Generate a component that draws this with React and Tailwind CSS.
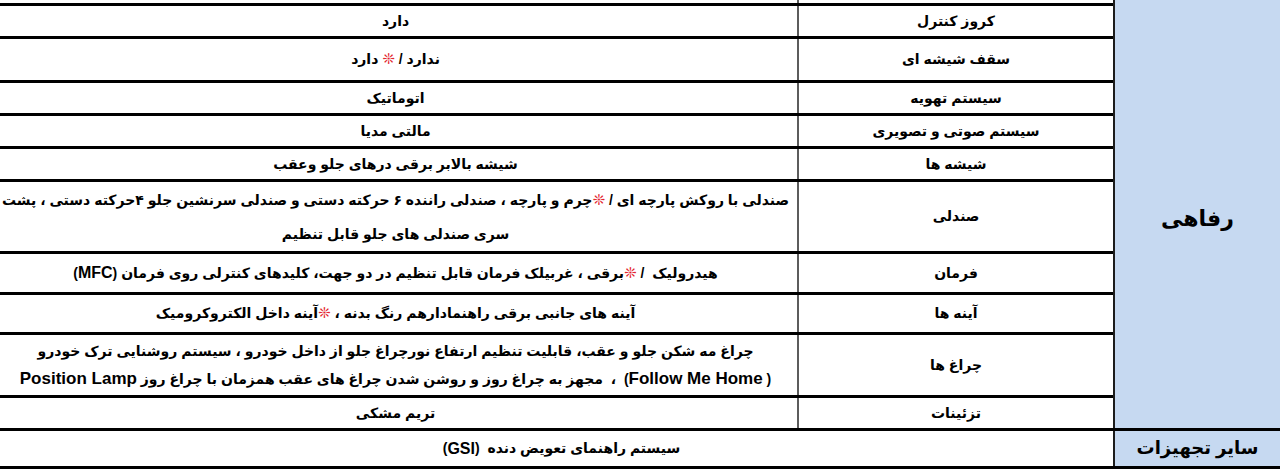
import React from 'react'

const Star = () => <span className="text-[#e3262f] text-[15px]">❊</span>

const Latin = ({ children }) => <span className="text-[17px]">{children}</span>

const rows = [
  { label: 'کروز کنترل', h: 'h-[33px]', value: 'دارد' },
  {
    label: 'سقف شیشه ای',
    h: 'h-[44px]',
    value: (
      <>
        ندارد / <Star /> دارد
      </>
    ),
  },
  { label: 'سیستم تهویه', h: 'h-[33px]', value: 'اتوماتیک' },
  { label: 'سیستم صوتی و تصویری', h: 'h-[33px]', value: 'مالتی مدیا' },
  { label: 'شیشه ها', h: 'h-[33px]', value: 'شیشه بالابر برقی درهای جلو وعقب' },
  {
    label: 'صندلی',
    h: 'h-[72px]',
    lead: 'leading-[34px]',
    value: (
      <>
        صندلی با روکش پارچه ای / <Star />چرم و پارچه ، صندلی راننده ۶ حرکته دستی و صندلی سرنشین جلو ۴حرکته دستی ، پشت
        <br />
        سری صندلی های جلو قابل تنظیم
      </>
    ),
  },
  {
    label: 'فرمان',
    h: 'h-[41px]',
    value: (
      <>
        هیدرولیک &nbsp;/ <Star />برقی ، غربیلک فرمان قابل تنظیم در دو جهت، کلیدهای کنترلی روی فرمان (<span className="text-[16px]">MFC</span>)
      </>
    ),
  },
  {
    label: 'آینه ها',
    h: 'h-[40px]',
    value: (
      <>
        آینه های جانبی برقی راهنمادارهم رنگ بدنه ، <Star />آینه داخل الکتروکرومیک
      </>
    ),
  },
  {
    label: 'چراغ ها',
    h: 'h-[63px]',
    lead: 'leading-[28px]',
    value: (
      <>
        چراغ مه شکن جلو و عقب، قابلیت تنظیم ارتفاع نورچراغ جلو از داخل خودرو ، سیستم روشنایی ترک خودرو
        <br />( <Latin>Follow Me Home</Latin>) &nbsp;، &nbsp;مجهز به چراغ روز و روشن شدن چراغ های عقب همزمان با چراغ روز <Latin>Position Lamp</Latin>
      </>
    ),
  },
  { label: 'تزئینات', h: 'h-[33px]', value: 'تریم مشکی' },
]

export default function App() {
  return (
    <div
      dir="rtl"
      className="w-[1280px] h-[470px] bg-white text-black font-bold text-[14px] font-['Liberation_Sans','DejaVu_Sans',sans-serif] overflow-hidden"
    >
      <div className="flex h-[428px]">
        <div className="w-[167px] shrink-0 bg-[#c6d9f1] border-l-2 border-[#1c1c1c] flex items-center justify-center pt-[8px]">
          <span className="text-[22px]">رفاهی</span>
        </div>
        <div className="flex-1 flex flex-col">
          <div className="h-[3px] flex">
            <div className="w-[316px] shrink-0 border-l-2 border-[#5c5c5c]" />
            <div className="flex-1" />
          </div>
          {rows.map((r, i) => (
            <div key={i} className={`${r.h} flex border-t-[3px] border-black`}>
              <div className="w-[316px] shrink-0 border-l-2 border-[#5c5c5c] flex items-center justify-center">
                {r.label}
              </div>
              <div className={`flex-1 flex items-center justify-center text-center whitespace-nowrap px-2 ${r.lead || ''}`}>
                <div>{r.value}</div>
              </div>
            </div>
          ))}
        </div>
      </div>
      <div className="flex h-[41px] border-y-[3px] border-black">
        <div className="w-[167px] shrink-0 bg-[#c6d9f1] border-l-2 border-[#1c1c1c] flex items-center justify-center">
          <span className="text-[18px]">سایر تجهیزات</span>
        </div>
        <div className="flex-1 flex items-center justify-center pl-[10px]">
          سیستم راهنمای تعویض دنده &nbsp;(<span className="text-[16px]">GSI</span>)
        </div>
      </div>
    </div>
  )
}
